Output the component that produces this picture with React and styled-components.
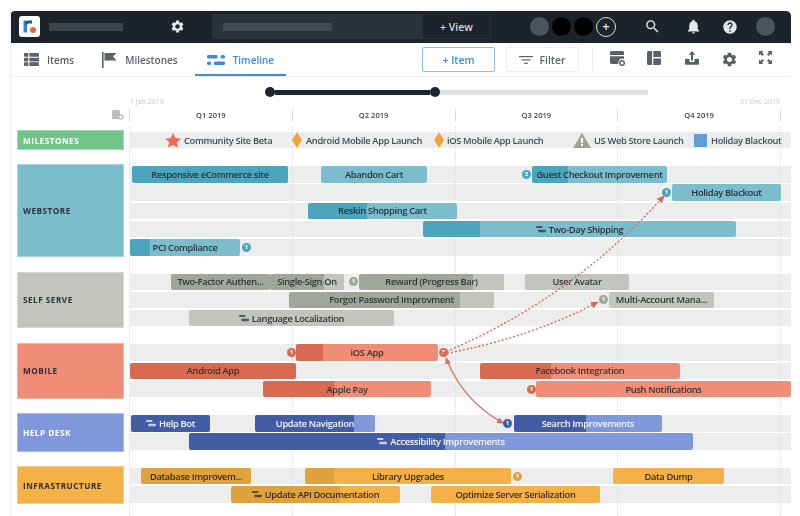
import React from 'react';
import styled, { createGlobalStyle } from 'styled-components';
import { FaThList } from 'react-icons/fa';
import { MdSettings, MdSearch, MdNotifications, MdHelp } from 'react-icons/md';

const GlobalStyle = createGlobalStyle`
  html, body {
    margin: 0;
    background: #fff;
    overflow: hidden;
    font-family: "Open Sans", "Noto Sans", sans-serif;
  }
`;

const TONES = {
  milestone: { light: '#72c589', dark: '#72c589', text: '#fff' },
  web: { light: '#7bbccd', dark: '#4ba5bd', text: '#26343c' },
  self: { light: '#c2c5bd', dark: '#a0a698', text: '#2f3637' },
  mobile: { light: '#f08d76', dark: '#d96a52', text: '#3a3230' },
  help: { light: '#7f98db', dark: '#425da6', text: '#f4f6fc' },
  infra: { light: '#f3b148', dark: '#e0a23c', text: '#352e20' },
};

const SECTIONS = [
  {
    name: 'WEBSTORE',
    tone: 'web',
    rows: [
      {
        bars: [
          { label: 'Responsive eCommerce site', start: 132, end: 288, progress: 288 },
          { label: 'Abandon Cart', start: 321, end: 427 },
          { label: 'Guest Checkout Improvement', start: 532, end: 667, progress: 568 },
        ],
        badges: [{ x: 526, count: 3 }],
      },
      {
        bars: [{ label: 'Holiday Blackout', start: 672, end: 781 }],
        badges: [{ x: 666, count: 1 }],
      },
      { bars: [{ label: 'Reskin Shopping Cart', start: 308, end: 457, progress: 367 }] },
      { bars: [{ label: 'Two-Day Shipping', start: 423, end: 736, progress: 480, epic: true }] },
      {
        bars: [{ label: 'PCI Compliance', start: 130, end: 240, progress: 150 }],
        badges: [{ x: 246, count: 1 }],
      },
    ],
  },
  {
    name: 'SELF SERVE',
    tone: 'self',
    rows: [
      {
        bars: [
          { label: 'Two-Factor Authen...', start: 171, end: 270, progress: 270 },
          { label: 'Single-Sign On', start: 270, end: 344, progress: 324 },
          { label: 'Reward (Progress Bar)', start: 359, end: 504, progress: 473 },
          { label: 'User Avatar', start: 525, end: 629 },
        ],
        badges: [{ x: 353, count: 1 }],
      },
      {
        bars: [
          { label: 'Forgot Password Improvment', start: 289, end: 494, progress: 460 },
          { label: 'Multi-Account Mana...', start: 609, end: 714 },
        ],
        badges: [{ x: 603, count: 1 }],
      },
      { bars: [{ label: 'Language Localization', start: 189, end: 394, epic: true }] },
    ],
  },
  {
    name: 'MOBILE',
    tone: 'mobile',
    rows: [
      {
        bars: [{ label: 'iOS App', start: 296, end: 438, progress: 323 }],
        badges: [{ x: 291, count: 1 }, { x: 443, count: 3 }],
      },
      {
        bars: [
          { label: 'Android App', start: 130, end: 296, progress: 296 },
          { label: 'Facebook Integration', start: 480, end: 680, progress: 551 },
        ],
      },
      {
        bars: [
          { label: 'Apple Pay', start: 263, end: 431, progress: 334 },
          { label: 'Push Notifications', start: 536, end: 791 },
        ],
        badges: [{ x: 531, count: 1 }],
      },
    ],
  },
  {
    name: 'HELP DESK',
    tone: 'help',
    rows: [
      {
        bars: [
          { label: 'Help Bot', start: 131, end: 210, progress: 210, epic: true },
          { label: 'Update Navigation', start: 255, end: 375, progress: 354 },
          { label: 'Search Improvements', start: 514, end: 662, progress: 586 },
        ],
        badges: [{ x: 507, count: 1 }],
      },
      { bars: [{ label: 'Accessibility Improvements', start: 189, end: 693, progress: 445, epic: true }] },
    ],
  },
  {
    name: 'INFRASTRUCTURE',
    tone: 'infra',
    rows: [
      {
        bars: [
          { label: 'Database Improvem...', start: 141, end: 251, progress: 251 },
          { label: 'Library Upgrades', start: 305, end: 511, progress: 334 },
          { label: 'Data Dump', start: 613, end: 724 },
        ],
        badges: [{ x: 517, count: 1 }],
      },
      {
        bars: [
          { label: 'Update API Documentation', start: 231, end: 400, progress: 340, epic: true },
          { label: 'Optimize Server Serialization', start: 431, end: 600 },
        ],
      },
    ],
  },
];

const Page = styled.div`
  padding: 10px 0 0 10px;
  width: 790px;
  height: 506px;
`;

// the reference shot is a soft upscaled image, so everything gets a tiny blur
const Frame = styled.div`
  width: 781px;
  height: 506px;
  box-sizing: border-box;
  border-left: 1px solid #eef0f0;
  overflow: hidden;
  position: relative;
  filter: blur(0.35px);
`;

const TopBar = styled.header`
  display: flex;
  align-items: center;
  height: 32.5px;
  margin: 0.5px 0 0 -1px;
  background: #1c232b;
  border-radius: 5px 5px 0 0;
`;

const LogoMark = styled.svg`
  margin-left: 9px;
  flex: none;
`;

const Redacted = styled.div`
  background: ${(p) => p.$color};
  width: ${(p) => p.$w}px;
  height: 8px;
  flex: none;
`;

const TitleSlot = styled.div`
  margin-left: 9px;
`;

const BarIcon = styled.span`
  display: flex;
  flex: none;
  margin-left: ${(p) => p.$ml}px;
  color: ${(p) => p.$color || '#e4e6e8'};
`;

const ViewTabs = styled.div`
  display: flex;
  align-items: center;
  flex: none;
  margin-left: 27px;
  height: 25px;
  width: 210px;
  padding-left: 11px;
  box-sizing: border-box;
  background: #2b323a;
`;

const AddView = styled.div`
  flex: none;
  width: 69px;
  height: 25px;
  box-sizing: border-box;
  border: 1px solid #262d35;
  color: #d8dadd;
  font-size: 10.5px;
  font-weight: 600;
  display: flex;
  align-items: center;
  justify-content: center;
`;

const Facepile = styled.div`
  display: flex;
  align-items: center;
  gap: 3px;
  margin-left: 39px;
`;

const Avatar = styled.div`
  width: 19px;
  height: 19px;
  border-radius: 50%;
  background: ${(p) => p.$color};
  margin-left: ${(p) => p.$ml || 0}px;
  flex: none;
`;

const AddAvatar = styled.div`
  width: 20px;
  height: 20px;
  box-sizing: border-box;
  border-radius: 50%;
  border: 1px solid #dfe1e3;
  color: #e8eaec;
  font-size: 13px;
  line-height: 16px;
  text-align: center;
  font-weight: 600;
`;

const Toolbar = styled.nav`
  display: flex;
  align-items: center;
  height: 34px;
  border-bottom: 1px solid #eff1f1;
  box-sizing: border-box;
  padding-left: 1px;
`;

const Tab = styled.div`
  display: flex;
  align-items: center;
  gap: 8px;
  height: 100%;
  box-sizing: border-box;
  padding: 0 12px;
  margin-right: ${(p) => p.$mr || 0}px;
  font-size: 10px;
  font-weight: 600;
  color: ${(p) => (p.$active ? '#3d8ae0' : '#5b6268')};
  border-bottom: 2px solid ${(p) => (p.$active ? '#3d8ae0' : 'transparent')};
  padding-top: 2px;
`;

const ToolGroup = styled.div`
  display: flex;
  align-items: center;
  margin-left: auto;
  gap: 11px;
`;

const ActionButton = styled.button`
  width: 73px;
  height: 25px;
  box-sizing: border-box;
  background: #fff;
  border: 1px solid ${(p) => (p.$primary ? '#8dbdf2' : '#eceeee')};
  border-radius: 2px;
  color: ${(p) => (p.$primary ? '#3d8ae0' : '#5b6268')};
  font-family: inherit;
  font-size: 10.5px;
  font-weight: 600;
  display: flex;
  align-items: center;
  justify-content: center;
  gap: 6px;
  padding: 0;
`;

const ToolDivider = styled.div`
  width: 1px;
  height: 23px;
  background: #eceeee;
  margin: 0 -5px 0 2px;
`;

const ToolIcons = styled.div`
  display: flex;
  margin-right: 8px;
`;

const ToolIcon = styled.span`
  width: ${(p) => p.$w}px;
  display: flex;
  justify-content: center;
  color: #596067;
`;

const Range = styled.div`
  display: flex;
  align-items: center;
  margin: 10px 0 0 254px;
  width: 383px;
  height: 10px;
  background: linear-gradient(#dfe3e4, #dfe3e4) center / 100% 5px no-repeat;
  border-radius: 3px;
`;

const RangeFill = styled.div`
  width: 155px;
  height: 5px;
  background: #1e252d;
  flex: none;
`;

const RangeHandle = styled.div`
  width: 10px;
  height: 10px;
  border-radius: 50%;
  background: #1e252d;
  flex: none;
`;

const DateRow = styled.div`
  display: flex;
  justify-content: space-between;
  padding: 0 11px 0 119px;
  height: 11px;
  font-size: 7px;
  line-height: 9px;
  color: #c4c8ca;
`;

const QuarterRow = styled.div`
  display: flex;
  margin: 1px 0 0 118px;
  height: 12px;
  width: 652px;
  position: relative;
`;

const Quarter = styled.div`
  flex: 1;
  border-left: 1px solid #d8dbdb;
  border-right: ${(p) => (p.$last ? '1px solid #d8dbdb' : '0')};
  font-size: 7.6px;
  font-weight: 600;
  line-height: 12px;
  text-align: center;
  color: #3f464b;
`;

const CalendarIcon = styled.svg`
  position: absolute;
  left: -17px;
  top: 0;
`;

const Board = styled.main`
  position: relative;
  margin-top: 9px;
  padding-left: 6px;
  display: flex;
  flex-direction: column;
  gap: 14.4px;
`;

const GridLines = styled.div`
  position: absolute;
  left: 118px;
  top: -3px;
  bottom: -30px;
  width: 652px;
  display: flex;
  z-index: 1;
  pointer-events: none;
`;

const GridLine = styled.div`
  flex: 1;
  border-left: 1px dotted #dcdfdf;
  border-right: ${(p) => (p.$last ? '1px dotted #dcdfdf' : '0')};
`;

const Section = styled.section`
  display: flex;
  gap: 6px;
`;

const SectionLabel = styled.div`
  width: 107px;
  flex: none;
  box-sizing: border-box;
  padding-left: 5px;
  display: flex;
  align-items: center;
  background: ${(p) => TONES[p.$tone].light};
  border: 1px solid #ffffff55;
  color: ${(p) => (p.$tone === 'milestone' || p.$tone === 'help' ? '#fff' : '#2b3238')};
  font-size: 8.2px;
  font-weight: 700;
  letter-spacing: 0.5px;
`;

const Rows = styled.div`
  display: flex;
  flex-direction: column;
  gap: 1.7px;
  padding: 1.8px 0;
`;

const Track = styled.div`
  display: grid;
  grid-template-columns: repeat(661, 1px);
  grid-template-rows: 16.5px;
  background: #eceeed;
  width: 661px;
`;

const Bar = styled.div`
  position: relative;
  z-index: 2;
  grid-row: 1;
  grid-column: ${(p) => p.$start - 129} / ${(p) => p.$end - 129};
  display: flex;
  align-items: center;
  justify-content: center;
  gap: 3px;
  min-width: 0;
  white-space: nowrap;
  overflow: hidden;
  border-radius: 2px;
  font-size: 9.3px;
  font-weight: 600;
  letter-spacing: -0.33px;
  color: ${(p) => TONES[p.$tone].text};
  background: linear-gradient(
    to right,
    ${(p) => TONES[p.$tone].dark} ${(p) => p.$fill}px,
    ${(p) => TONES[p.$tone].light} ${(p) => p.$fill}px
  );
`;

const Badge = styled.div`
  position: relative;
  z-index: 2;
  grid-row: 1;
  grid-column: ${(p) => p.$x - 133} / span 9;
  width: 9px;
  height: 9px;
  align-self: center;
  border-radius: 50%;
  background: ${(p) => TONES[p.$tone].dark};
  color: #fff;
  font-size: 6px;
  font-weight: 700;
  line-height: 9px;
  text-align: center;
`;

const Milestone = styled.div`
  position: relative;
  z-index: 2;
  grid-row: 1;
  grid-column: ${(p) => p.$x - 129} / span 90;
  display: flex;
  align-items: center;
  gap: ${(p) => p.$gap}px;
  font-size: 9.3px;
  font-weight: 600;
  letter-spacing: -0.33px;
  color: #414a52;
  white-space: nowrap;

  svg {
    flex: none;
  }
`;

const Links = styled.svg`
  position: absolute;
  left: 0;
  top: 0;
  z-index: 3;
  pointer-events: none;
`;

const GanttGlyph = () => (
  <svg width="10" height="7" viewBox="0 0 11 8" fill="currentColor" opacity="0.75">
    <rect x="0" y="0" width="7" height="2.4" rx="0.6" />
    <rect x="2.5" y="4.2" width="8.5" height="2.8" rx="0.6" />
  </svg>
);

const Logo = () => (
  <LogoMark width="21" height="21" viewBox="0 0 21 21">
    <rect width="21" height="21" rx="3" fill="#fff" />
    <path d="M4.500 4.500h3.500v12H4.500z" fill="#2f86d8" />
    <path d="M6 8c0-2.600 2-3.500 4-3.500h3v3H10C8.700 7.500 8 8 8 9.500z" fill="#20558f" />
    <circle cx="14" cy="14" r="3" fill="#ef6248" />
  </LogoMark>
);

const FlagIcon = () => (
  <svg width="15" height="16" viewBox="0 0 15 16" fill="#5b6268">
    <rect x="0" y="0" width="1.600" height="16" />
    <path d="M2.500 1H14.500L11 4.500L14.500 8.500H2.500z" />
  </svg>
);

const TimelineIcon = () => (
  <svg width="18" height="10" viewBox="0 0 18 10" fill="#3d8ae0">
    <rect x="0" y="0" width="10.500" height="3.600" rx="1.200" />
    <rect x="13.500" y="0" width="4.500" height="3.600" rx="1.600" />
    <rect x="0" y="6.400" width="4" height="3.600" rx="1.600" />
    <rect x="7" y="6.400" width="11" height="3.600" rx="1.200" />
  </svg>
);

const FilterIcon = () => (
  <svg width="14" height="8" viewBox="0 0 14 8" fill="#5b6268">
    <rect x="0" y="0" width="14" height="1.200" />
    <rect x="2.500" y="3.300" width="9" height="1.200" />
    <rect x="5" y="6.600" width="4" height="1.200" />
  </svg>
);

const CardIcon = () => (
  <svg width="15" height="15" viewBox="0 0 15 15" fill="currentColor">
    <path d="M1.500 0h11A1.500 1.500 0 0 1 14 1.500V4H0V1.500A1.500 1.500 0 0 1 1.500 0z" />
    <path d="M0 5.200h14V8a4 4 0 0 0-5.500 5H1.500A1.500 1.500 0 0 1 0 11.500z" />
    <circle cx="12" cy="12" r="2.300" fill="none" stroke="currentColor" strokeWidth="1.500" />
  </svg>
);

const PanelsIcon = () => (
  <svg width="14" height="14" viewBox="0 0 14 14" fill="currentColor">
    <path d="M1.500 0H5v14H1.500A1.500 1.500 0 0 1 0 12.500v-11A1.500 1.500 0 0 1 1.500 0z" />
    <path d="M6.300 0h6.200A1.500 1.500 0 0 1 14 1.500V6H6.300z" />
    <path d="M6.300 7.500H14v5a1.500 1.500 0 0 1-1.500 1.500H6.300z" />
  </svg>
);

const ExportIcon = () => (
  <svg width="14" height="14" viewBox="0 0 14 14" fill="currentColor">
    <path d="M7 0l3.400 3.800H8v5.700H6V3.800H3.600z" />
    <path d="M0 8h4.500v3h5V8H14v4.800a1 1 0 0 1-1 1H1a1 1 0 0 1-1-1z" />
  </svg>
);

const ExpandIcon = () => (
  <svg width="13" height="13" viewBox="0 0 13 13" fill="currentColor">
    <path d="M0 0h4.500L3 1.500l2 2-1.500 1.500-2-2L0 4.500z" />
    <path d="M13 0v4.500L11.500 3l-2 2L8 3.500l2-2L8.500 0z" />
    <path d="M0 13V8.500L1.500 10l2-2L5 9.500l-2 2L4.500 13z" />
    <path d="M13 13H8.500L10 11.500l-2-2L9.500 8l2 2L13 8.500z" />
  </svg>
);

const StarShape = () => (
  <svg width="16" height="15" viewBox="0 0 16 15">
    <path d="M8 0l2.300 5.100 5.700.6-4.200 3.700 1.200 5.600L8 11.900 3 14.600l1.200-5.600L0 5.700l5.700-.6z" fill="#ef6a54" />
  </svg>
);

const DiamondShape = () => (
  <svg width="10" height="16" viewBox="0 0 10 16">
    <path d="M5 0l5 8-5 8-5-8z" fill="#f2a33e" />
  </svg>
);

const WarningShape = () => (
  <svg width="18" height="15" viewBox="0 0 18 15">
    <path d="M9 0l9 15H0z" fill="#9da396" />
    <rect x="8" y="5" width="2" height="5" fill="#fff" />
    <rect x="8" y="11" width="2" height="2" fill="#fff" />
  </svg>
);

const SquareShape = () => (
  <svg width="13" height="13" viewBox="0 0 13 13">
    <rect width="13" height="13" fill="#619fd3" />
  </svg>
);

const MILESTONES = [
  { label: 'Community Site Beta', x: 165, gap: 3, shape: <StarShape /> },
  { label: 'Android Mobile App Launch', x: 292, gap: 4, shape: <DiamondShape /> },
  { label: 'iOS Mobile App Launch', x: 434, gap: 3, shape: <DiamondShape /> },
  { label: 'US Web Store Launch', x: 573, gap: 3, shape: <WarningShape /> },
  { label: 'Holiday Blackout', x: 694, gap: 4, shape: <SquareShape /> },
];

const App = () => {
  return (
    <Page>
      <GlobalStyle />
      <Frame>
        <TopBar>
          <Logo />
          <TitleSlot><Redacted $w={74} $color="#3d444c" /></TitleSlot>
          <BarIcon $ml={47}><MdSettings size={15} /></BarIcon>
          <ViewTabs><Redacted $w={109} $color="#434a52" /></ViewTabs>
          <AddView>+ View</AddView>
          <Facepile>
            <Avatar $color="#4b535c" />
            <Avatar $color="#000" />
            <Avatar $color="#000" />
            <AddAvatar>+</AddAvatar>
          </Facepile>
          <BarIcon $ml={28}><MdSearch size={17} /></BarIcon>
          <BarIcon $ml={24}><MdNotifications size={17} /></BarIcon>
          <BarIcon $ml={20}><MdHelp size={16} /></BarIcon>
          <Avatar $color="#4b535c" $ml={18} />
        </TopBar>

        <Toolbar>
          <Tab $mr={4}><FaThList size={15} />Items</Tab>
          <Tab $mr={5}><FlagIcon />Milestones</Tab>
          <Tab $active><TimelineIcon />Timeline</Tab>
          <ToolGroup>
            <ActionButton $primary>+ Item</ActionButton>
            <ActionButton><FilterIcon />Filter</ActionButton>
            <ToolDivider />
            <ToolIcons>
              <ToolIcon $w={36}><CardIcon /></ToolIcon>
              <ToolIcon $w={37}><PanelsIcon /></ToolIcon>
              <ToolIcon $w={39}><ExportIcon /></ToolIcon>
              <ToolIcon $w={37}><MdSettings size={17} /></ToolIcon>
              <ToolIcon $w={35}><ExpandIcon /></ToolIcon>
            </ToolIcons>
          </ToolGroup>
        </Toolbar>

        <Range>
          <RangeHandle />
          <RangeFill />
          <RangeHandle />
        </Range>
        <DateRow>
          <span>1 Jan 2019</span>
          <span>31 Dec 2019</span>
        </DateRow>
        <QuarterRow>
          <CalendarIcon width="12" height="11" viewBox="0 0 12 11" fill="#b9bec0">
            <rect x="0" y="1" width="8" height="9" rx="1.500" />
            <circle cx="9" cy="8" r="2.200" fill="#fff" stroke="#b9bec0" strokeWidth="1.200" />
          </CalendarIcon>
          <Quarter>Q1 2019</Quarter>
          <Quarter>Q2 2019</Quarter>
          <Quarter>Q3 2019</Quarter>
          <Quarter $last>Q4 2019</Quarter>
        </QuarterRow>

        <Board>
          <GridLines>
            <GridLine />
            <GridLine />
            <GridLine />
            <GridLine $last />
          </GridLines>

          <Section>
            <SectionLabel $tone="milestone">MILESTONES</SectionLabel>
            <Rows>
              <Track>
                {MILESTONES.map((m) => (
                  <Milestone key={m.label} $x={m.x} $gap={m.gap}>{m.shape}{m.label}</Milestone>
                ))}
              </Track>
            </Rows>
          </Section>

          {SECTIONS.map((section) => (
            <Section key={section.name}>
              <SectionLabel $tone={section.tone}>{section.name}</SectionLabel>
              <Rows>
                {section.rows.map((row, i) => (
                  <Track key={i}>
                    {row.bars.map((bar) => (
                      <Bar
                        key={bar.label}
                        $tone={section.tone}
                        $start={bar.start}
                        $end={bar.end}
                        $fill={(bar.progress || bar.start) - bar.start}
                      >
                        {bar.epic && <GanttGlyph />}
                        {bar.label}
                      </Bar>
                    ))}
                    {(row.badges || []).map((badge) => (
                      <Badge key={badge.x} $tone={section.tone} $x={badge.x}>{badge.count}</Badge>
                    ))}
                  </Track>
                ))}
              </Rows>
            </Section>
          ))}

          {/* dependency arrows, coords are relative to the board (x-11, y-130) */}
          <Links width="770" height="376" viewBox="11 130 770 376" fill="none">
            <defs>
              <marker id="head" markerWidth="6" markerHeight="6" refX="5" refY="3" orient="auto-start-reverse">
                <path d="M0 0.500L5.500 3L0 5.500z" fill="#d9695a" />
              </marker>
            </defs>
            <path d="M443 353Q570 300 664 196" stroke="#d9695a" strokeWidth="1.400" strokeDasharray="2 2" markerEnd="url(#head)" />
            <path d="M443 354Q530 338 598 302" stroke="#d9695a" strokeWidth="1.400" strokeDasharray="2 2" markerEnd="url(#head)" />
            <path d="M446 358Q462 400 503 423" stroke="#d9695a" strokeWidth="1.200" markerStart="url(#head)" markerEnd="url(#head)" />
          </Links>
        </Board>
      </Frame>
    </Page>
  );
};

export default App;
